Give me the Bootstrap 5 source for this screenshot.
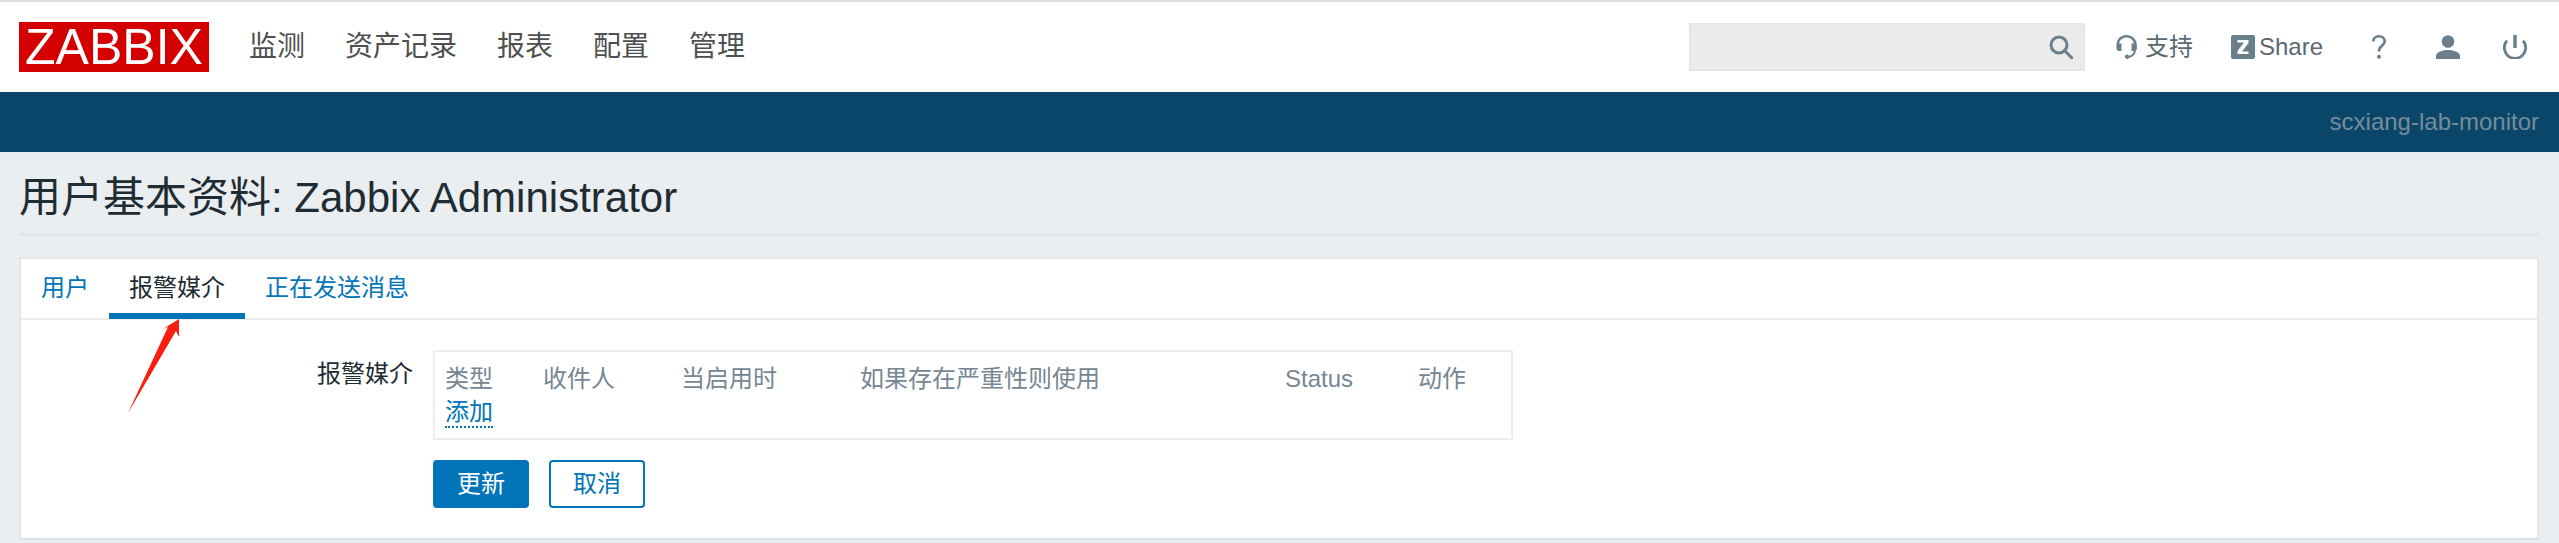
<!DOCTYPE html>
<html lang="zh">
<head>
    <meta charset="UTF-8">
    <meta name="viewport" content="width=device-width, initial-scale=1.0">
    <title>用户基本资料</title>
    <link rel="stylesheet" href="https://cdn.jsdelivr.net/npm/bootstrap@5.3.0/dist/css/bootstrap.min.css">
    <style>
        body { background: #ebeef0; font-family: "Liberation Sans", "Noto Sans CJK SC", sans-serif; font-size: 24px; color: #1f2c33; overflow: hidden; }
        a { text-decoration: none; }
        .top-strip { height: 2px; background: #dcdce2; }
        .zbx-header { height: 90px; background: #fff; padding: 0 32px 0 19px; }
        .zbx-logo { width: 190px; height: 50px; background: #d40000; color: #fff; font-size: 50px; line-height: 50px; text-align: center; }
        .main-menu { margin-left: 40px; gap: 40px; font-size: 28px; }
        .main-menu a { color: #4f4f4f; }
        .search-box { width: 396px; height: 48px; background: #ebebeb; border: 2px solid #e6e6e6; padding-right: 10px; }
        .tool-item { color: #5a6870; height: 24px; line-height: 24px; }
        .tool-item svg { display: block; flex: none; }
        .sub-bar { height: 60px; background: #0a466a; color: #768d99; line-height: 60px; padding-right: 20px; text-align: right; }
        .page-body { padding: 0 20px 0 19px; }
        .page-title { box-sizing: content-box; height: 64px; padding-top: 17px; border-bottom: 3px solid #e2e6e9; margin: 0 0 21px; font-size: 42px; font-weight: 400; line-height: 57px; }
        .main-card { position: relative; background: #fff; border: 2px solid #e2e6e9; border-bottom-color: #dde2e5; border-radius: 0; height: 283px; }
        .tab-row { height: 61px; border-bottom: 2px solid #ebeef0; }
        .tab-row a { display: block; height: 60px; padding: 11px 20px 0; line-height: 36px; color: #0275b8; }
        .tab-row a.active { color: #1f2c33; border-bottom: 6px solid #0275b8; }
        .media-row { padding-top: 30px; }
        .media-label { width: 392px; text-align: right; line-height: 32px; padding-top: 8px; color: #1f2c33; }
        .media-field { margin-left: 20px; }
        .media-box { width: 1080px; height: 90px; border: 2px solid #ebeef0; padding: 10px 10px 0; }
        .media-table { table-layout: fixed; width: 1060px; }
        .media-table th { font-weight: 400; color: #768692; padding: 0; height: 33px; line-height: 33px; }
        .media-table td { padding: 0; line-height: 33px; }
        .add-link { color: #0275b8; border-bottom: 2px dotted #0275b8; display: inline-block; line-height: 28px; }
        .form-btns { gap: 20px; margin-top: 20px; }
        .zbx-btn { width: 96px; height: 48px; padding: 0; font-size: 24px; line-height: 44px; border: 2px solid #0275b8; border-radius: 4px; }
        .zbx-btn-main { background: #0275b8; color: #fff; }
        .zbx-btn-alt { background: #fff; color: #0275b8; }
        .red-arrow { position: absolute; left: 100px; top: 50px; }
    </style>
</head>
<body>
    <div class="top-strip"></div>

    <!-- 顶部菜单 -->
    <header class="zbx-header d-flex align-items-center">
        <a class="zbx-logo d-block" href="#">ZABBIX</a>
        <nav class="main-menu d-flex">
            <a href="#">监测</a>
            <a href="#">资产记录</a>
            <a href="#">报表</a>
            <a href="#">配置</a>
            <a href="#">管理</a>
        </nav>
        <div class="search-box ms-auto d-flex align-items-center justify-content-end">
            <svg width="24" height="24" viewBox="0 0 24 24" fill="none" stroke="#6a7f8c" stroke-width="3">
                <circle cx="10" cy="10" r="8"/>
                <path d="M15.500 15.500 23 23" stroke-linecap="round"/>
            </svg>
        </div>
        <a class="tool-item d-flex align-items-center" href="#" style="margin-left:31px">
            <svg width="21" height="24" viewBox="0 0 21 24" fill="#6a7f8c">
                <path d="M10.500 0C4.700 0 .5 4.200.5 10v3.500C.5 15 1.600 16 3 16h2.500V8.500H3.100C3.800 4.900 6.700 2.600 10.500 2.600s6.700 2.300 7.400 5.900h-2.400V16h2.300c-.4 2.600-2.300 4.400-5 4.800-.3-.7-1-1.200-1.800-1.200-1.100 0-2 .9-2 2.200s.9 2.200 2 2.200c.8 0 1.500-.4 1.800-1.100 4-.4 6.800-3.300 7.100-7.300.6-.4 1-1.100 1-1.900V10C20.500 4.200 16.300 0 10.500 0z"/>
            </svg>
            <span class="ms-2">支持</span>
        </a>
        <a class="tool-item d-flex align-items-center" href="#" style="margin-left:38px">
            <svg width="24" height="24" viewBox="0 0 24 24">
                <rect width="24" height="24" rx="2" fill="#6a7f8c"/>
                <path d="M6.500 5h11v3l-6.500 8.500h6.500V19h-11v-3L13 7.500H6.500z" fill="#fff"/>
            </svg>
            <span class="ms-1">Share</span>
        </a>
        <a class="tool-item" href="#" style="margin-left:49px">
            <svg width="14" height="24" viewBox="0 0 14 24" fill="none" stroke="#6a7f8c" stroke-width="2.600">
                <path d="M1.300 6.500C1.300 3.300 3.600 1.300 7 1.300s5.700 2 5.700 5c0 2.400-1.300 3.500-3 4.800-1.800 1.300-2.700 2.300-2.700 5.400"/>
                <circle cx="7" cy="21.800" r="2" fill="#6a7f8c" stroke="none"/>
            </svg>
        </a>
        <a class="tool-item" href="#" style="margin-left:50px">
            <svg width="24" height="24" viewBox="0 0 24 24" fill="#6a7f8c">
                <circle cx="12" cy="6.500" r="6.300"/>
                <path d="M0 24v-3c0-3.500 5.500-6 12-6s12 2.500 12 6v3z"/>
            </svg>
        </a>
        <a class="tool-item" href="#" style="margin-left:43px">
            <svg width="24" height="24" viewBox="0 0 24 24" fill="none" stroke="#6a7f8c">
                <path d="M4 5.600A10.700 10.700 0 1 0 20 5.600" stroke-width="2.800"/>
                <path d="M12 0v13" stroke-width="3.500"/>
            </svg>
        </a>
    </header>

    <div class="sub-bar">scxiang-lab-monitor</div>

    <main class="page-body">
        <h1 class="page-title">用户基本资料: Zabbix Administrator</h1>

        <div class="main-card">
            <nav class="tab-row nav">
                <a href="#">用户</a>
                <a href="#" class="active">报警媒介</a>
                <a href="#">正在发送消息</a>
            </nav>

            <div class="media-row d-flex">
                <div class="media-label">报警媒介</div>
                <div class="media-field">
                    <div class="media-box">
                        <table class="media-table">
                            <colgroup>
                                <col width="98"><col width="138"><col width="179"><col width="425"><col width="133"><col width="87">
                            </colgroup>
                            <thead>
                                <tr><th>类型</th><th>收件人</th><th>当启用时</th><th>如果存在严重性则使用</th><th>Status</th><th>动作</th></tr>
                            </thead>
                            <tbody>
                                <tr><td colspan="6"><a class="add-link" href="#">添加</a></td></tr>
                            </tbody>
                        </table>
                    </div>
                    <div class="form-btns d-flex">
                        <button type="button" class="btn zbx-btn zbx-btn-main">更新</button>
                        <button type="button" class="btn zbx-btn zbx-btn-alt">取消</button>
                    </div>
                </div>
            </div>

            <!-- 标注箭头 -->
            <svg class="red-arrow" width="70" height="110" viewBox="0 0 70 110">
                <path d="M58 10 42 20 47 18 7 104 55 22 58 28z" fill="#fa1e10"/>
            </svg>
        </div>
    </main>
</body>
</html>
